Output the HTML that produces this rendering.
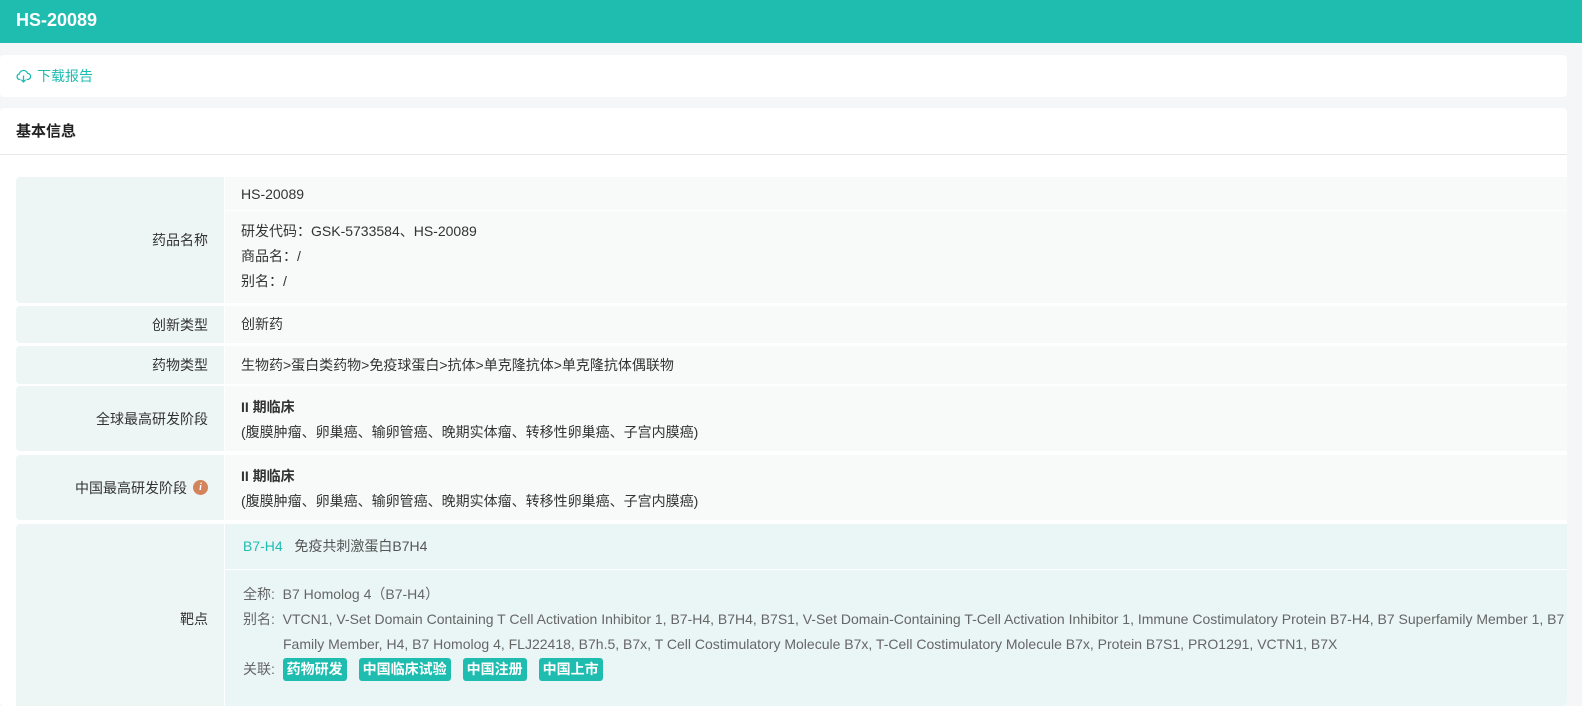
<!DOCTYPE html>
<html><head><meta charset="utf-8"><style>
*{margin:0;padding:0;box-sizing:border-box}
body{width:1582px;height:706px;overflow:hidden;background:#f5f6f8;font-family:"Liberation Sans","Noto Sans CJK SC",sans-serif;font-size:14px;color:#333;position:relative}
.hd{position:absolute;left:0;top:0;width:1582px;height:43px;background:#1fbcb0;color:#fff;font-weight:bold;font-size:18px;line-height:40px;padding-left:16px}
.dl{position:absolute;left:0;top:55px;width:1567px;height:42px;background:#fff;border-radius:4px;color:#1fbcb0;font-size:14px;line-height:42px;padding-left:37px}
.dl svg{position:absolute;left:16px;top:14px}
.main{position:absolute;left:0;top:108px;width:1567px;height:598px;background:#fff;border-radius:4px;overflow:hidden}
.tt{height:47px;border-bottom:1px solid #e8e8e8;font-weight:bold;font-size:15px;line-height:47px;padding-left:16px;color:#222}
.row{position:absolute;left:16px;width:1700px;display:flex}
.lb{width:208px;background:#eef6f5;border-radius:4px 0 0 4px;text-align:right;padding-right:16px;display:flex;align-items:center;justify-content:flex-end;color:#333}
.vl{flex:1;margin-left:1px;background:#f8faf9;padding-left:16px;color:#333;white-space:nowrap}
.tag{display:inline-block;background:#1fbcb0;color:#fff;font-weight:bold;border-radius:3px;padding:0 4px;height:23px;line-height:23px;margin-right:12px}
.info{display:inline-block;width:15px;height:15px;border-radius:50%;background:#d4845a;color:#fff;font-style:italic;font-weight:bold;font-size:10px;line-height:15px;text-align:center;margin-left:6px;font-family:"Liberation Serif",serif}
</style></head><body>
<div class="hd">HS-20089</div>
<div class="dl"><svg width="15" height="14" viewBox="0 0 15 14" fill="none" stroke="#1fbcb0" stroke-width="1.3"><path d="M4.5 10.5H3.5A2.8 2.8 0 0 1 3.3 5 4.3 4.3 0 0 1 11.6 4.4 3 3 0 0 1 11.5 10.5H10.5"/><path d="M7.5 6.5V13M5.3 10.8L7.5 13 9.7 10.8"/></svg>下载报告</div>
<div class="main">
<div class="tt">基本信息</div>
<div class="row" style="top:69px;height:126px"><div class="lb">药品名称</div><div class="vl" style="padding-left:0">
<div style="height:34px;line-height:34px;padding-left:16px;border-bottom:1px solid #fff">HS-20089</div>
<div style="padding:8px 0 0 16px;line-height:25px">研发代码：GSK-5733584、HS-20089<br>商品名：/<br>别名：/</div></div></div>
<div class="row" style="top:198px;height:37px"><div class="lb">创新类型</div><div class="vl" style="line-height:37px">创新药</div></div>
<div class="row" style="top:238px;height:38px"><div class="lb">药物类型</div><div class="vl" style="line-height:38px">生物药&gt;蛋白类药物&gt;免疫球蛋白&gt;抗体&gt;单克隆抗体&gt;单克隆抗体偶联物</div></div>
<div class="row" style="top:278px;height:65px"><div class="lb">全球最高研发阶段</div><div class="vl" style="padding-top:9px;line-height:25px"><b>II 期临床</b><br>(腹膜肿瘤、卵巢癌、输卵管癌、晚期实体瘤、转移性卵巢癌、子宫内膜癌)</div></div>
<div class="row" style="top:347px;height:65px"><div class="lb">中国最高研发阶段<span class="info">i</span></div><div class="vl" style="padding-top:9px;line-height:25px"><b>II 期临床</b><br>(腹膜肿瘤、卵巢癌、输卵管癌、晚期实体瘤、转移性卵巢癌、子宫内膜癌)</div></div>
<div class="row" style="top:416px;height:190px"><div class="lb">靶点</div><div class="vl" style="background:#eaf6f5;padding-left:0;color:#555">
<div style="height:46px;line-height:44px;padding-left:18px;border-bottom:1px solid #fff"><span style="color:#1fbcb0">B7-H4</span>&nbsp;&nbsp; 免疫共刺激蛋白B7H4</div>
<div style="padding:12px 0 0 18px;line-height:25px;color:#666">全称:&nbsp; B7 Homolog 4（B7-H4）<br>别名:&nbsp; VTCN1, V-Set Domain Containing T Cell Activation Inhibitor 1, B7-H4, B7H4, B7S1, V-Set Domain-Containing T-Cell Activation Inhibitor 1, Immune Costimulatory Protein B7-H4, B7 Superfamily Member 1, B7<br><span style="padding-left:40px">Family Member, H4, B7 Homolog 4, FLJ22418, B7h.5, B7x, T Cell Costimulatory Molecule B7x, T-Cell Costimulatory Molecule B7x, Protein B7S1, PRO1291, VCTN1, B7X</span><br>关联:&nbsp; <span class="tag">药物研发</span><span class="tag">中国临床试验</span><span class="tag">中国注册</span><span class="tag">中国上市</span></div>
</div></div>
</div>
</body></html>
